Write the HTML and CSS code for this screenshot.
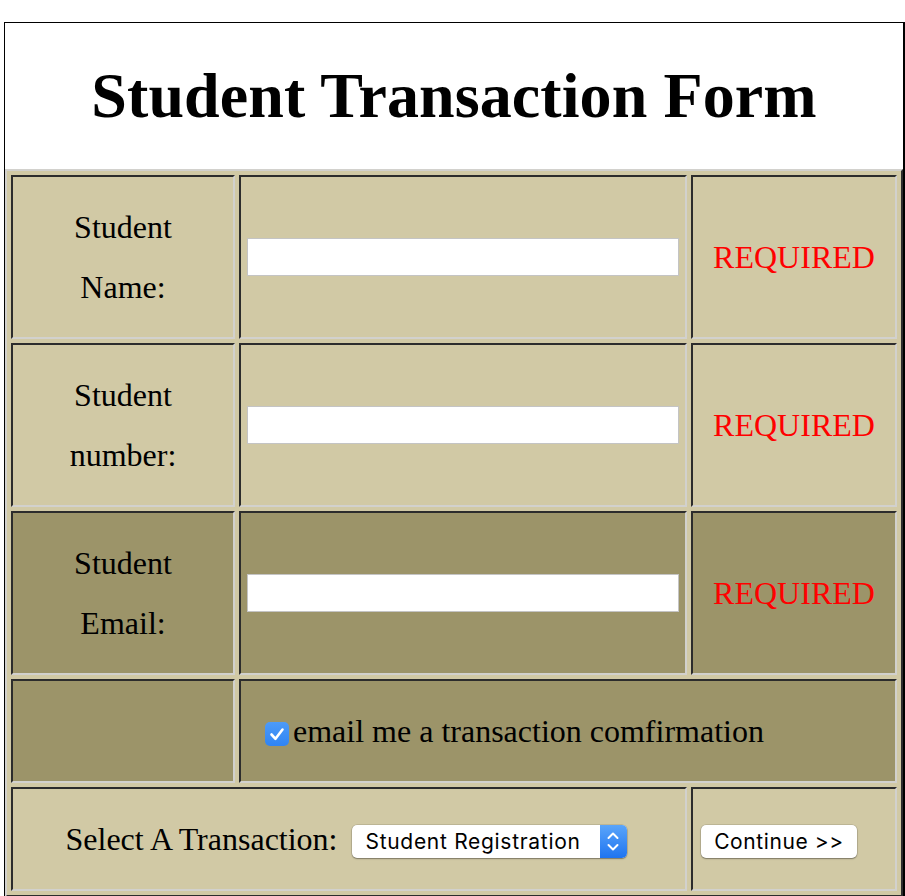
FILE: index.html
```html
<!DOCTYPE html>
<html lang="en">
<head>
<meta charset="utf-8">
<title>Student Transaction Form</title>
<link rel="stylesheet" href="styles.css">
</head>
<body>
<form class="page" action="#">
  <header class="masthead">
    <h1 class="title">Student Transaction Form</h1>
  </header>
  <table class="grid">
    <colgroup>
      <col class="col-label">
      <col class="col-field">
      <col class="col-note">
    </colgroup>
    <tr class="row-light row-tall">
      <td class="label">Student<br>Name:</td>
      <td class="field"><input class="text-input" type="text" name="name"></td>
      <td class="note">REQUIRED</td>
    </tr>
    <tr class="row-light row-tall">
      <td class="label">Student<br>number:</td>
      <td class="field"><input class="text-input" type="text" name="number"></td>
      <td class="note">REQUIRED</td>
    </tr>
    <tr class="row-dark row-tall">
      <td class="label">Student<br>Email:</td>
      <td class="field"><input class="text-input" type="text" name="email"></td>
      <td class="note">REQUIRED</td>
    </tr>
    <tr class="row-dark">
      <td class="label"></td>
      <td class="check-cell" colspan="2">
        <label class="check"><span class="checkbox"><svg viewBox="0 0 24 24" width="24" height="24"><path d="M6.5 12.5 L10.5 16.8 L17.5 7.5" fill="none" stroke="#fff" stroke-width="2.6" stroke-linecap="round" stroke-linejoin="round"/></svg></span>email me a transaction comfirmation</label>
      </td>
    </tr>
    <tr class="row-light">
      <td class="select-cell" colspan="2">
        <span class="select-label">Select A Transaction:</span>
        <span class="select-wrap"><select class="select" name="transaction"><option>Student Registration</option></select><span class="stepper"><svg viewBox="0 0 24 33" width="24" height="33"><path d="M7.5 13 L12 8.5 L16.5 13 M7.5 20 L12 24.5 L16.5 20" fill="none" stroke="#fff" stroke-width="2" stroke-linecap="round" stroke-linejoin="round"/></svg></span></span>
      </td>
      <td class="button-cell"><button class="btn" type="button">Continue &gt;&gt;</button></td>
    </tr>
  </table>
</form>
</body>
</html>
```

FILE: styles.css
```css
html, body {
  margin: 0;
  padding: 0;
  background: #ffffff;
}

body {
  font-family: "Liberation Serif", "Times New Roman", serif;
  font-size: 32px;
  color: #000;
}

.page {
  margin: 22px 0 0 4px;
  width: 898px;
  border-left: 1px solid #000;
  border-top: 1px solid #000;
  border-right: 2px solid #000;
}

.masthead {
  padding: 36px 0;
  text-align: center;
}

.title {
  margin: 0;
  font-size: 64px;
  line-height: 74px;
  font-weight: bold;
  letter-spacing: 0.1px;
}

.grid {
  width: 898px;
  border-collapse: separate;
  border-spacing: 4px;
  border-style: solid;
  border-width: 2px;
  border-color: #d2d1cd #2c2c2c #2c2c2c #d2d1cd;
  background: #d1c9a5;
  table-layout: fixed;
}

.col-label { width: 224px; }
.col-field { width: 448px; }
.col-note { width: 206px; }

.grid td {
  border-style: solid;
  border-width: 2px;
  border-color: #2c2c2c #d2d1cd #d2d1cd #2c2c2c;
  padding: 20px 6px;
  line-height: 60px;
  vertical-align: middle;
}

.row-light td { background: #d1c9a5; }
.row-dark td { background: #9c9469; }

.label {
  text-align: center;
}

.note {
  text-align: center;
  color: #ff0000;
}

.text-input {
  display: block;
  box-sizing: border-box;
  width: 100%;
  height: 38px;
  margin: 0;
  border: 1px solid #c4c4c4;
  background: #fff;
  font-size: 20px;
}

.grid td.check-cell {
  padding-left: 24px;
}

.check {
  white-space: nowrap;
}

.checkbox {
  display: inline-block;
  width: 24px;
  height: 24px;
  margin-right: 4px;
  border-radius: 5px;
  background: linear-gradient(#4d9bf8, #2f84f3);
  vertical-align: -4px;
}

.checkbox svg {
  display: block;
}

.grid td.select-cell {
  text-align: center;
  white-space: nowrap;
  padding-right: 12px;
}

.select-label {
  margin-right: 6px;
}

.select-wrap {
  display: inline-flex;
  width: 275px;
  height: 33px;
  border-radius: 5px;
  background: #fff;
  box-shadow: 0 0 0 0.5px rgba(0, 0, 0, 0.18), 0 1px 1.5px rgba(0, 0, 0, 0.35);
  vertical-align: middle;
  overflow: hidden;
  position: relative;
  top: -1px;
}

.select {
  -webkit-appearance: none;
  appearance: none;
  flex: 1;
  min-width: 0;
  margin: 0;
  border: 0;
  padding: 0 0 0 14px;
  background: transparent;
  font-family: "Inter", "Liberation Sans", sans-serif;
  font-size: 21px;
  letter-spacing: 0.7px;
  color: #000;
  outline: none;
}

.stepper {
  width: 27px;
  flex: none;
  background: linear-gradient(#5aa5fa, #1f74f0);
  display: flex;
  justify-content: center;
}

.stepper svg {
  display: block;
}

.grid td.button-cell {
  padding-left: 8px;
  text-align: left;
}

.btn {
  width: 156px;
  height: 33px;
  margin: 0;
  padding: 0;
  border: 0;
  border-radius: 5px;
  background: #fff;
  box-shadow: 0 0 0 0.5px rgba(0, 0, 0, 0.18), 0 1px 1.5px rgba(0, 0, 0, 0.35);
  font-family: "Inter", "Liberation Sans", sans-serif;
  font-size: 21px;
  letter-spacing: 0.6px;
  color: #000;
  vertical-align: middle;
  position: relative;
  top: -1px;
}
```
